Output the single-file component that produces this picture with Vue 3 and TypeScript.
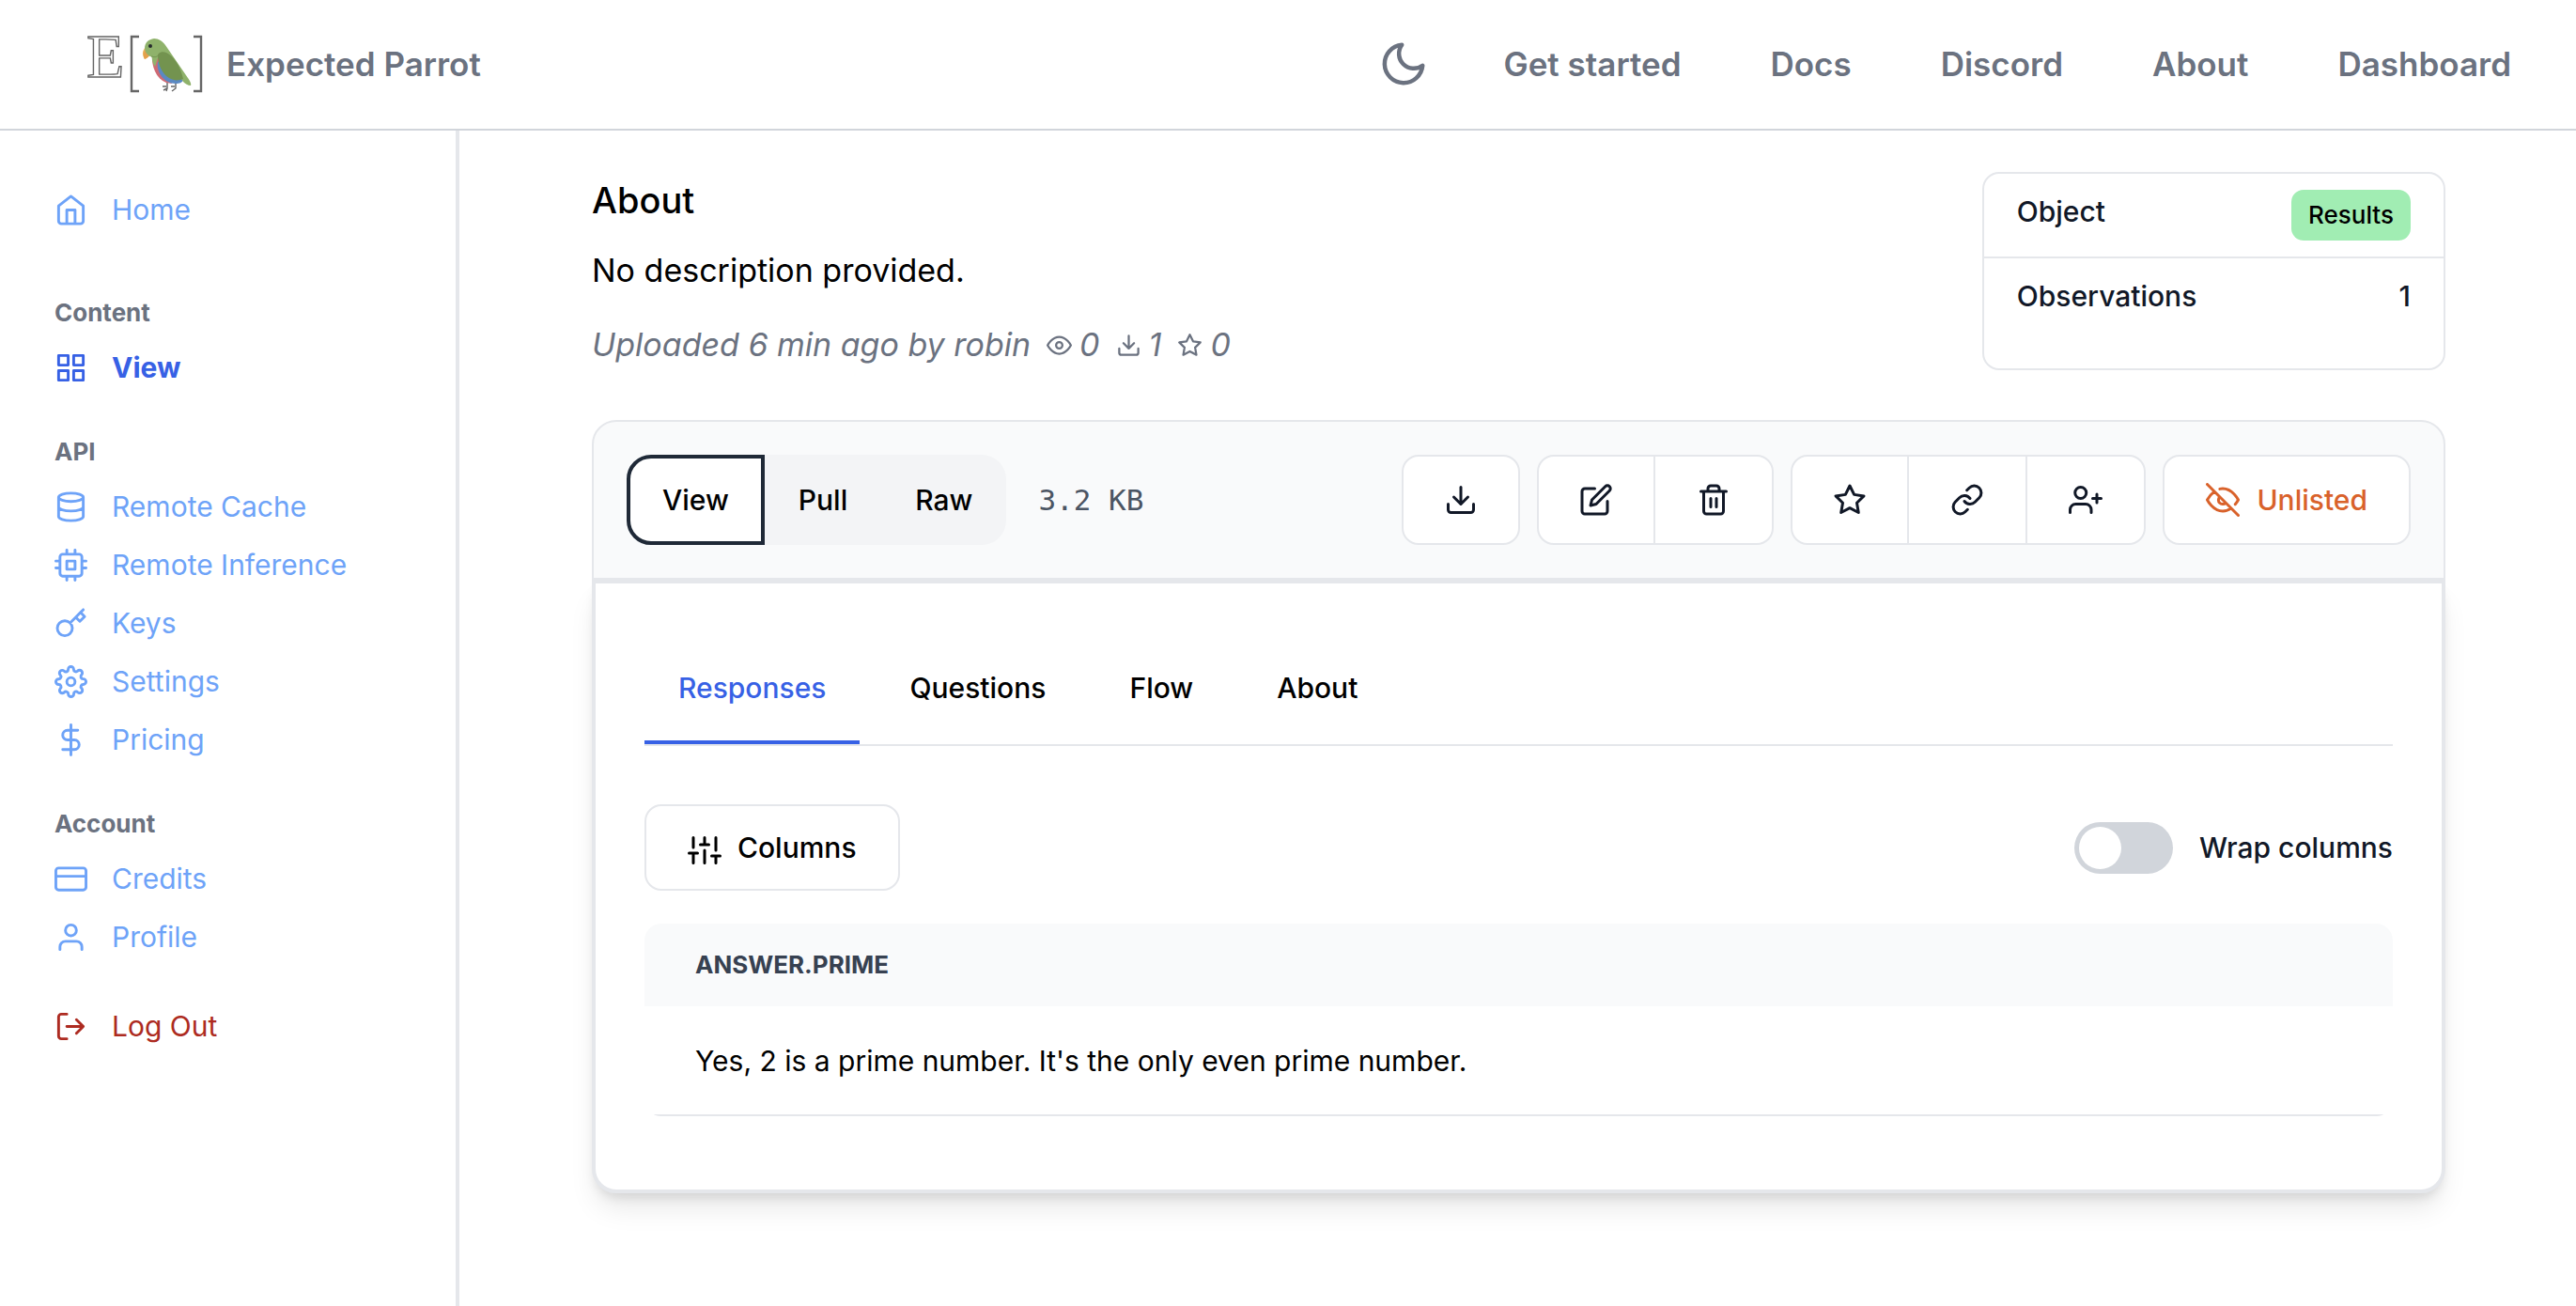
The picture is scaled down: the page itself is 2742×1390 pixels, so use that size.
<script setup lang="ts">
import { ref } from 'vue'

type IconName =
  | 'home' | 'grid' | 'database' | 'cpu' | 'key' | 'settings' | 'dollar' | 'card' | 'user' | 'logout'
  | 'moon' | 'eye' | 'download' | 'star' | 'edit' | 'trash' | 'link' | 'userPlus' | 'eyeOff' | 'sliders'

const icons: Record<IconName, string> = {
  home: 'M3 9l9-7 9 7v11a2 2 0 0 1-2 2H5a2 2 0 0 1-2-2zM9 22V12h6v10',
  grid: 'M3 3h7v7H3zM14 3h7v7h-7zM14 14h7v7h-7zM3 14h7v7H3z',
  database: 'M3 5a9 3 0 1 0 18 0a9 3 0 1 0-18 0M21 12c0 1.66-4 3-9 3s-9-1.34-9-3M3 5v14c0 1.66 4 3 9 3s9-1.34 9-3V5',
  cpu: 'M6 4h12a2 2 0 0 1 2 2v12a2 2 0 0 1-2 2H6a2 2 0 0 1-2-2V6a2 2 0 0 1 2-2zM9 9h6v6H9zM9 1v3M15 1v3M9 20v3M15 20v3M20 9h3M20 14h3M1 9h3M1 14h3',
  key: 'M21 2l-2 2m-7.61 7.61a5.5 5.5 0 1 1-7.778 7.778 5.5 5.5 0 0 1 7.777-7.777zm0 0L15.5 7.5m0 0l3 3L22 7l-3-3m-3.5 3.5L19 4',
  settings: 'M15 12a3 3 0 1 1-6 0a3 3 0 1 1 6 0M19.4 15a1.65 1.65 0 0 0 .33 1.82l.06.06a2 2 0 1 1-2.83 2.83l-.06-.06a1.65 1.65 0 0 0-1.82-.33 1.65 1.65 0 0 0-1 1.51V21a2 2 0 0 1-4 0v-.09A1.65 1.65 0 0 0 9 19.4a1.65 1.65 0 0 0-1.82.33l-.06.06a2 2 0 1 1-2.83-2.83l.06-.06a1.65 1.65 0 0 0 .33-1.82 1.65 1.65 0 0 0-1.51-1H3a2 2 0 0 1 0-4h.09A1.65 1.65 0 0 0 4.6 9a1.65 1.65 0 0 0-.33-1.82l-.06-.06a2 2 0 1 1 2.83-2.83l.06.06a1.65 1.65 0 0 0 1.82.33H9a1.65 1.65 0 0 0 1-1.51V3a2 2 0 0 1 4 0v.09a1.65 1.65 0 0 0 1 1.51 1.65 1.65 0 0 0 1.82-.33l.06-.06a2 2 0 1 1 2.83 2.83l-.06.06a1.65 1.65 0 0 0-.33 1.82V9a1.65 1.65 0 0 0 1.51 1H21a2 2 0 0 1 0 4h-.09a1.65 1.65 0 0 0-1.51 1z',
  dollar: 'M12 1v22M17 5H9.5a3.5 3.5 0 0 0 0 7h5a3.5 3.5 0 0 1 0 7H6',
  card: 'M3 4h18a2 2 0 0 1 2 2v12a2 2 0 0 1-2 2H3a2 2 0 0 1-2-2V6a2 2 0 0 1 2-2zM1 10h22',
  user: 'M20 21v-2a4 4 0 0 0-4-4H8a4 4 0 0 0-4 4v2M16 7a4 4 0 1 1-8 0a4 4 0 1 1 8 0',
  logout: 'M9 21H5a2 2 0 0 1-2-2V5a2 2 0 0 1 2-2h4M16 17l5-5-5-5M21 12H9',
  moon: 'M21 12.79A9 9 0 1 1 11.21 3 7 7 0 0 0 21 12.79z',
  eye: 'M1 12s4-8 11-8 11 8 11 8-4 8-11 8-11-8-11-8zM15 12a3 3 0 1 1-6 0a3 3 0 1 1 6 0',
  download: 'M21 15v4a2 2 0 0 1-2 2H5a2 2 0 0 1-2-2v-4M7 10l5 5 5-5M12 15V3',
  star: 'M12 2l3.09 6.26L22 9.27l-5 4.87 1.18 6.88L12 17.77l-6.18 3.25L7 14.14 2 9.27l6.91-1.01z',
  edit: 'M11 4H4a2 2 0 0 0-2 2v14a2 2 0 0 0 2 2h14a2 2 0 0 0 2-2v-7M18.5 2.5a2.121 2.121 0 0 1 3 3L12 15l-4 1 1-4z',
  trash: 'M3 6h18M19 6v14a2 2 0 0 1-2 2H7a2 2 0 0 1-2-2V6m3 0V4a2 2 0 0 1 2-2h4a2 2 0 0 1 2 2v2M10 11v6M14 11v6',
  link: 'M10 13a5 5 0 0 0 7.54.54l3-3a5 5 0 0 0-7.07-7.07l-1.72 1.71M14 11a5 5 0 0 0-7.54-.54l-3 3a5 5 0 0 0 7.07 7.07l1.71-1.71',
  userPlus: 'M16 21v-2a4 4 0 0 0-4-4H5a4 4 0 0 0-4 4v2M12.5 7a4 4 0 1 1-8 0a4 4 0 1 1 8 0M20 8v6M23 11h-6',
  eyeOff: 'M17.94 17.94A10.07 10.07 0 0 1 12 20c-7 0-11-8-11-8a18.45 18.45 0 0 1 5.06-5.94M9.9 4.24A9.12 9.12 0 0 1 12 4c7 0 11 8 11 8a18.5 18.5 0 0 1-2.16 3.19m-6.72-1.07a3 3 0 1 1-4.24-4.24M1 1l22 22',
  sliders: 'M4 21v-7M4 10V3M12 21v-9M12 8V3M20 21v-5M20 12V3M1 14h6M9 8h6M17 16h6',
}

interface NavItem { label: string; icon: IconName; active?: boolean }
interface NavGroup { title: string; items: NavItem[] }

const topLinks = ['Get started', 'Docs', 'Discord', 'About', 'Dashboard']

const groups: NavGroup[] = [
  { title: 'Content', items: [{ label: 'View', icon: 'grid', active: true }] },
  {
    title: 'API',
    items: [
      { label: 'Remote Cache', icon: 'database' },
      { label: 'Remote Inference', icon: 'cpu' },
      { label: 'Keys', icon: 'key' },
      { label: 'Settings', icon: 'settings' },
      { label: 'Pricing', icon: 'dollar' },
    ],
  },
  {
    title: 'Account',
    items: [
      { label: 'Credits', icon: 'card' },
      { label: 'Profile', icon: 'user' },
    ],
  },
]

const stats: { icon: IconName; value: number; label: string }[] = [
  { icon: 'eye', value: 0, label: 'Views' },
  { icon: 'download', value: 1, label: 'Downloads' },
  { icon: 'star', value: 0, label: 'Stars' },
]

const modes = ['View', 'Pull', 'Raw']
const mode = ref('View')

const actionGroups: { icon: IconName; label: string }[][] = [
  [{ icon: 'download', label: 'Download' }],
  [{ icon: 'edit', label: 'Edit' }, { icon: 'trash', label: 'Delete' }],
  [{ icon: 'star', label: 'Star' }, { icon: 'link', label: 'Copy link' }, { icon: 'userPlus', label: 'Share' }],
]

const tabs = ['Responses', 'Questions', 'Flow', 'About']
const tab = ref('Responses')

const wrapColumns = ref(false)
const columns = ['answer.prime']
const rows = [["Yes, 2 is a prime number. It's the only even prime number."]]
</script>

<template>
  <div class="page">
    <header class="topbar">
      <a href="#" class="brand">
        <svg class="logo" viewBox="0 0 124 64" aria-hidden="true">
          <text x="0" y="46" class="logo-letter">E</text>
          <path d="M56 3h-8v58h8M114 3h8v58h-8" fill="none" stroke="#666" stroke-width="2.4" />
          <g transform="translate(58 4)">
            <path d="M28 48v6l-4 2M28 54l-1 3M27 52h-4M37 48v6l-4 3M36 52h-4" fill="none" stroke="#666" stroke-width="1.4" />
            <path d="M12 18c-1 12 4 26 15 30l6 1-14-30z" fill="#cf6a74" />
            <path d="M12 16c-1 6 0 11 3 15l4-12z" fill="#8fb26b" />
            <path d="M18 26c-2 10 6 23 19 23 4 0 7-1 8-4L24 24z" fill="#5b89c2" />
            <path d="M8 9c-6 2-8 8-4 14 3-1 5-3 5-6z" fill="#eab35c" />
            <path d="M4 14c-1 3-2 5 0 9 4-2 6-4 6-7z" fill="#e3a04c" />
            <path d="M4 12C4 5 8 2 14 1c5 0 9 3 12 7l24 35c2 3 4 6 3 8-3 0-6-2-8-4L30 24l-12-3C10 22 5 18 4 12z" fill="#8fb26b" />
            <path d="M18 19c0-3 5-5 9-3 8 4 15 14 18 28-5 2-10 2-15-1-7-4-12-14-12-24z" fill="#73934f" />
            <path d="M11 20c4 1 6 1 8-2" fill="none" stroke="#73934f" stroke-width="1" />
            <circle cx="10" cy="9" r="2" fill="#262b2e" />
          </g>
        </svg>
        <span>Expected Parrot</span>
      </a>
      <nav class="toplinks" aria-label="Main">
        <button type="button" class="theme" aria-label="Toggle dark mode">
          <svg class="icon moon" viewBox="0 0 24 24"><path :d="icons.moon" /></svg>
        </button>
        <a v-for="link in topLinks" :key="link" href="#">{{ link }}</a>
      </nav>
    </header>

    <div class="body">
      <aside class="sidebar">
        <nav aria-label="Sidebar">
          <a href="#" class="item home">
            <svg class="icon" viewBox="0 0 24 24"><path :d="icons.home" /></svg>Home
          </a>
          <section v-for="group in groups" :key="group.title" class="group">
            <h2>{{ group.title }}</h2>
            <a v-for="item in group.items" :key="item.label" href="#" class="item" :class="{ active: item.active }">
              <svg class="icon" viewBox="0 0 24 24"><path :d="icons[item.icon]" /></svg>{{ item.label }}
            </a>
          </section>
          <a href="#" class="item logout">
            <svg class="icon" viewBox="0 0 24 24"><path :d="icons.logout" /></svg>Log Out
          </a>
        </nav>
      </aside>

      <main class="main">
        <div class="summary">
          <div class="about">
            <h1>About</h1>
            <p class="description">No description provided.</p>
            <p class="meta">
              <span>Uploaded 6 min ago by robin</span>
              <span v-for="stat in stats" :key="stat.label" class="stat">
                <svg class="icon small" viewBox="0 0 24 24" :aria-label="stat.label"><path :d="icons[stat.icon]" /></svg>{{ stat.value }}
              </span>
            </p>
          </div>
          <dl class="info">
            <div>
              <dt>Object</dt>
              <dd><span class="badge">Results</span></dd>
            </div>
            <div>
              <dt>Observations</dt>
              <dd>1</dd>
            </div>
          </dl>
        </div>

        <div class="toolbar">
          <div class="modes">
            <button v-for="m in modes" :key="m" type="button" :class="{ active: m === mode }" @click="mode = m">{{ m }}</button>
          </div>
          <span class="size">3.2 KB</span>
          <div class="actions">
            <div v-for="(actions, i) in actionGroups" :key="i" class="action-group">
              <button v-for="action in actions" :key="action.label" type="button" :aria-label="action.label">
                <svg class="icon" viewBox="0 0 24 24"><path :d="icons[action.icon]" /></svg>
              </button>
            </div>
            <button type="button" class="visibility">
              <svg class="icon" viewBox="0 0 24 24"><path :d="icons.eyeOff" /></svg>Unlisted
            </button>
          </div>
        </div>

        <section class="panel">
          <div class="tabs" role="tablist">
            <button v-for="t in tabs" :key="t" type="button" role="tab" :aria-selected="t === tab" :class="{ active: t === tab }" @click="tab = t">{{ t }}</button>
          </div>

          <div class="controls">
            <button type="button" class="columns">
              <svg class="icon" viewBox="0 0 24 24"><path :d="icons.sliders" /></svg>Columns
            </button>
            <label class="switch">
              <input v-model="wrapColumns" type="checkbox" role="switch" />
              <span>Wrap columns</span>
            </label>
          </div>

          <div class="table-wrap">
            <table>
              <thead>
                <tr><th v-for="c in columns" :key="c" scope="col">{{ c }}</th></tr>
              </thead>
              <tbody>
                <tr v-for="(row, i) in rows" :key="i">
                  <td v-for="(cell, j) in row" :key="j">{{ cell }}</td>
                </tr>
              </tbody>
            </table>
          </div>
        </section>
      </main>
    </div>
  </div>
</template>

<style>
body {
  margin: 0;
  background: #fff;
}
</style>

<style scoped>
.page {
  min-height: 100vh;
  display: flex;
  flex-direction: column;
  font-family: Inter, "Liberation Sans", sans-serif;
  font-size: 30px;
  line-height: 42px;
  color: #000;
}
*,
*::before,
*::after {
  box-sizing: border-box;
}
a {
  color: inherit;
  text-decoration: none;
}
button {
  margin: 0;
  padding: 0;
  border: 0;
  background: none;
  font: inherit;
  color: inherit;
  cursor: pointer;
}
h1,
h2,
p,
dl,
dd {
  margin: 0;
}
.icon {
  width: 36px;
  height: 36px;
  flex: none;
  fill: none;
  stroke: currentColor;
  stroke-width: 2;
  stroke-linecap: round;
  stroke-linejoin: round;
}
.icon.small {
  width: 27px;
  height: 27px;
}

.topbar {
  display: flex;
  align-items: center;
  justify-content: space-between;
  height: 139px;
  padding: 0 69px 2px 92px;
  border-bottom: 2px solid #d1d5db;
  font-size: 35px;
  font-weight: 600;
  color: #6b7280;
}
.brand {
  display: flex;
  align-items: center;
  gap: 25px;
}
.logo {
  width: 124px;
  height: 64px;
  overflow: visible;
}
.logo-letter {
  font-family: "Liberation Serif", serif;
  font-size: 66px;
  font-weight: 400;
  fill: #fff;
  stroke: #666;
  stroke-width: 1.4px;
}
.toplinks {
  display: flex;
  align-items: center;
  gap: 95px;
}
.theme {
  display: flex;
  margin-right: -16px;
}
.moon {
  width: 54px;
  height: 54px;
}

.body {
  flex: 1;
  display: flex;
}
.sidebar {
  flex: none;
  width: 489px;
  padding: 53px 24px 53px 58px;
  border-right: 4px solid #e5e7eb;
}
.item {
  display: flex;
  align-items: center;
  gap: 26px;
  height: 62px;
  color: #6ea3f8;
}
.item .icon {
  width: 35px;
  height: 35px;
}
.item.active {
  font-weight: 700;
  color: #3761e5;
}
.item.home {
  margin-bottom: 61px;
}
.group {
  margin-bottom: 41px;
}
.group h2 {
  margin-bottom: 9px;
  font-size: 26px;
  line-height: 36px;
  font-weight: 700;
  color: #6b7280;
}
.item.logout {
  margin-top: -8px;
  color: #ad2b21;
}

.main {
  flex: 1;
  min-width: 0;
  padding: 44px 139px 60px 141px;
}
.summary {
  display: flex;
  justify-content: space-between;
  margin-bottom: 53px;
}
.about {
  padding-bottom: 3px;
}
.about h1 {
  font-size: 38px;
  line-height: 60px;
  font-weight: 500;
}
.description {
  margin-top: 21px;
  font-size: 34px;
  line-height: 48px;
}
.meta {
  display: flex;
  align-items: center;
  gap: 17px;
  margin-top: 31px;
  font-size: 34px;
  line-height: 48px;
  font-style: italic;
  color: #6b7280;
}
.stat {
  display: flex;
  align-items: center;
  gap: 8px;
}
.info {
  width: 25%;
  border: 2px solid #e5e7eb;
  border-radius: 18px;
  font-weight: 500;
  line-height: 46px;
  color: #111827;
}
.info > div {
  display: flex;
  justify-content: space-between;
  padding: 17px 35px;
}
.info > div + div {
  border-top: 2px solid #e5e7eb;
}
.badge {
  display: block;
  padding: 8px 18px;
  border-radius: 13px;
  background: #a1edb3;
  font-size: 26px;
  line-height: 38px;
  color: #000;
}

.toolbar {
  display: flex;
  align-items: center;
  gap: 34px;
  padding: 35px;
  border: 2px solid #e5e7eb;
  border-radius: 26px 26px 0 0;
  background: #f9fafb;
}
.modes {
  display: flex;
  border-radius: 26px;
  background: #f3f4f6;
  font-weight: 500;
}
.modes button {
  height: 96px;
  padding: 0 36px;
}
.modes button.active {
  padding: 0 34px;
  border: 4px solid #1f2937;
  background: #fff;
}
.modes button:first-child {
  border-radius: 26px 0 0 26px;
}
.modes button:last-child {
  border-radius: 0 26px 26px 0;
}
.size {
  font-family: "DejaVu Sans Mono", "Liberation Mono", monospace;
  font-size: 31px;
  color: #4b5563;
}
.actions {
  display: flex;
  gap: 18px;
  margin-left: auto;
  color: #111827;
}
.action-group {
  display: flex;
}
.action-group button {
  display: flex;
  align-items: center;
  justify-content: center;
  width: 126px;
  height: 96px;
  border: 2px solid #e5e7eb;
  background: #fff;
}
.action-group button + button {
  border-left: 0;
}
.action-group button:first-child {
  border-top-left-radius: 18px;
  border-bottom-left-radius: 18px;
}
.action-group button:last-child {
  border-top-right-radius: 18px;
  border-bottom-right-radius: 18px;
}
.visibility {
  display: flex;
  align-items: center;
  gap: 18px;
  height: 96px;
  padding: 0 44px;
  border: 2px solid #e5e7eb;
  border-radius: 18px;
  background: #fff;
  font-weight: 500;
  color: #d9622b;
}

.panel {
  padding: 56px 52px 78px;
  border: 4px solid #e5e7eb;
  border-radius: 0 0 26px 26px;
  background: #fff;
  box-shadow: 0 20px 30px -6px rgba(0, 0, 0, 0.1), 0 8px 12px -4px rgba(0, 0, 0, 0.1);
}
.tabs {
  display: flex;
  gap: 17px;
  border-bottom: 2px solid #e5e7eb;
  font-weight: 500;
}
.tabs button {
  padding: 34px 36px 35px;
  border-bottom: 4px solid transparent;
}
.tabs button.active {
  border-color: #3761e5;
  color: #3761e5;
}
.controls {
  display: flex;
  align-items: center;
  justify-content: space-between;
  margin: 62px 0 35px;
  font-weight: 500;
}
.columns {
  height: 92px;
  padding: 0 44px;
  border: 2px solid #e5e7eb;
  border-radius: 18px;
}
.columns .icon {
  margin-right: 17px;
  vertical-align: middle;
}
.switch {
  display: flex;
  align-items: center;
  gap: 28px;
  color: #111827;
}
.switch input {
  display: flex;
  align-items: center;
  appearance: none;
  width: 105px;
  height: 55px;
  margin: 0;
  padding: 0 5px;
  border-radius: 28px;
  background: #d1d5db;
}
.switch input::before {
  content: "";
  width: 45px;
  height: 45px;
  border-radius: 50%;
  background: #fff;
}
.switch input:checked {
  justify-content: flex-end;
  background: #3761e5;
}
.table-wrap {
  overflow: hidden;
  border-radius: 18px;
}
table {
  width: 100%;
  border-collapse: collapse;
}
th {
  height: 88px;
  padding: 0 54px;
  background: #f9fafb;
  font-size: 26px;
  font-weight: 700;
  text-align: left;
  text-transform: uppercase;
  color: #374151;
}
td {
  height: 116px;
  padding: 0 54px;
  border-bottom: 2px solid #e5e7eb;
}
</style>
